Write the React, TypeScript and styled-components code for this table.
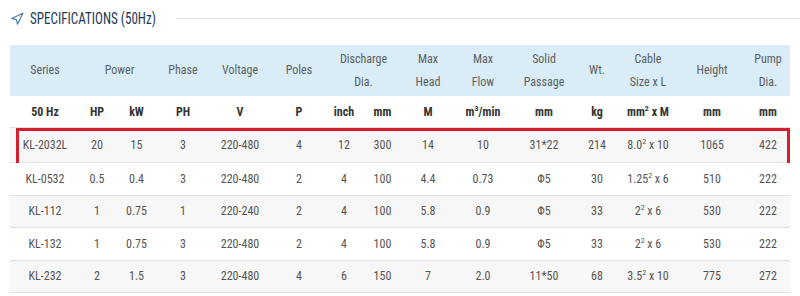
import React from "react";
import styled, { createGlobalStyle } from "styled-components";
import { Navigation } from "lucide-react";

const FONT = `"Roboto Condensed", "Liberation Sans Narrow", "DejaVu Sans Condensed", Roboto, sans-serif`;

const Global = createGlobalStyle`
  html, body { margin: 0; padding: 0; background: #fff; }
  body { font-family: ${FONT}; }
  * { box-sizing: border-box; }
`;

const COLS = "70px 34px 45px 48px 66px 52px 38px 39px 52px 58px 64px 42px 60px 68px 44px";

const Page = styled.div`
  width: 800px;
  height: 296px;
  overflow: hidden;
`;

const TitleBar = styled.div`
  display: flex;
  align-items: center;
  height: 36px;
  padding-left: 10px;
  gap: 6px;
`;

const TitleIcon = styled(Navigation)`
  color: #4f7ba2;
  flex: none;
  margin-top: 1px;
`;

const Title = styled.h2`
  margin: 0;
  width: 132px;
  flex: none;
  font-family: ${FONT};
  font-weight: 400;
  font-size: 17px;
  color: #1f3a58;
  white-space: nowrap;
  overflow: visible;
`;

const TitleText = styled.span`
  display: inline-block;
  transform: scaleX(0.77);
  transform-origin: left center;
`;

const Rule = styled.div`
  flex: 1;
  height: 1px;
  background: #e6e6e6;
  margin-left: 8px;
`;

const Table = styled.div`
  margin: 9px 0 0 10px;
  width: 780px;
`;

const HeadRow = styled.div`
  display: grid;
  grid-template-columns: ${COLS};
  background: #daecf5;
  height: 51px;
`;

const HeadCell = styled.div<{ $span?: number }>`
  grid-column: span ${(p) => p.$span ?? 1};
  display: flex;
  align-items: center;
  justify-content: center;
  text-align: center;
  font-size: 12px;
  line-height: 23px;
  color: #5b5f63;
`;

const UnitRow = styled.div`
  display: grid;
  grid-template-columns: ${COLS};
  height: 32px;
  border-bottom: 1px solid #e2e2e2;
`;

const UnitCell = styled.div`
  display: flex;
  align-items: center;
  justify-content: center;
  font-size: 12px;
  font-weight: 700;
  color: #333;
`;

const DataRow = styled.div<{ $striped: boolean; $highlight?: boolean }>`
  position: relative;
  display: grid;
  grid-template-columns: ${COLS};
  height: ${(p) => (p.$highlight ? "35px" : "32.5px")};
  background: ${(p) => (p.$striped ? "#f7f7f7" : "#fff")};
  border-bottom: 1px solid #e2e2e2;
  ${(p) =>
    p.$highlight
      ? `
    &::after {
      content: "";
      position: absolute;
      left: 6px;
      right: 0;
      top: 0;
      height: 33px;
      border: 3px solid #d4202c;
      pointer-events: none;
    }
  `
      : ""}
`;

const DataCell = styled.div`
  display: flex;
  align-items: center;
  justify-content: center;
  font-size: 12px;
  color: #555;
  white-space: nowrap;
`;

const Sup = styled.sup`
  font-size: 8px;
  line-height: 0;
  vertical-align: 5px;
`;

type Row = (string | React.ReactNode)[];

const sq = (base: string, rest: string) => (
  <>
    {base}
    <Sup>2</Sup>
    {rest}
  </>
);

const rows: Row[] = [
  ["KL-2032L", "20", "15", "3", "220-480", "4", "12", "300", "14", "10", "31*22", "214", sq("8.0", " x 10"), "1065", "422"],
  ["KL-0532", "0.5", "0.4", "3", "220-480", "2", "4", "100", "4.4", "0.73", "Φ5", "30", sq("1.25", " x 6"), "510", "222"],
  ["KL-112", "1", "0.75", "1", "220-240", "2", "4", "100", "5.8", "0.9", "Φ5", "33", sq("2", " x 6"), "530", "222"],
  ["KL-132", "1", "0.75", "3", "220-480", "2", "4", "100", "5.8", "0.9", "Φ5", "33", sq("2", " x 6"), "530", "222"],
  ["KL-232", "2", "1.5", "3", "220-480", "4", "6", "150", "7", "2.0", "11*50", "68", sq("3.5", " x 10"), "775", "272"],
];

const headers: { label: React.ReactNode; span?: number }[] = [
  { label: "Series" },
  { label: "Power", span: 2 },
  { label: "Phase" },
  { label: "Voltage" },
  { label: "Poles" },
  { label: <>Discharge<br />Dia.</>, span: 2 },
  { label: <>Max<br />Head</> },
  { label: <>Max<br />Flow</> },
  { label: <>Solid<br />Passage</> },
  { label: "Wt." },
  { label: <>Cable<br />Size x L</> },
  { label: "Height" },
  { label: <>Pump<br />Dia.</> },
];

const units: React.ReactNode[] = [
  "50 Hz",
  "HP",
  "kW",
  "PH",
  "V",
  "P",
  "inch",
  "mm",
  "M",
  <>m<Sup>3</Sup>/min</>,
  "mm",
  "kg",
  <>mm<Sup>2</Sup> x M</>,
  "mm",
  "mm",
];

export default function App() {
  return (
    <Page>
      <Global />
      <TitleBar>
        <TitleIcon size={14} strokeWidth={2} />
        <Title>
          <TitleText>SPECIFICATIONS (50Hz)</TitleText>
        </Title>
        <Rule />
      </TitleBar>
      <Table>
        <HeadRow>
          {headers.map((h, i) => (
            <HeadCell key={i} $span={h.span}>
              <span>{h.label}</span>
            </HeadCell>
          ))}
        </HeadRow>
        <UnitRow>
          {units.map((u, i) => (
            <UnitCell key={i}>
              <span>{u}</span>
            </UnitCell>
          ))}
        </UnitRow>
        {rows.map((r, ri) => (
          <DataRow key={ri} $striped={ri % 2 === 0} $highlight={ri === 0}>
            {r.map((c, ci) => (
              <DataCell key={ci}>
                <span>{c}</span>
              </DataCell>
            ))}
          </DataRow>
        ))}
      </Table>
    </Page>
  );
}
